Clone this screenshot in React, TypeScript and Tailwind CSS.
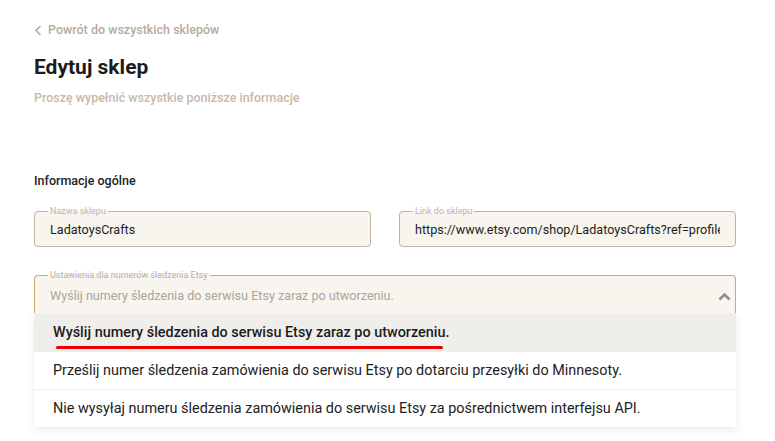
import React from 'react'

const font = { fontFamily: 'Roboto, "Noto Sans", sans-serif' }

function OutlinedField({ label, value }: { label: string; value: string }) {
  return (
    <fieldset className="relative h-[40px] min-w-0 overflow-hidden rounded-[4px] border border-[#c2b3a3] bg-[#f8f5ef] px-[15px]">
      <legend className="ml-[-2px] px-[2px] text-[9px] leading-[9px] text-[#bdb5ad]">{label}</legend>
      <div className="mt-[5px] overflow-hidden whitespace-nowrap text-[12.6px] leading-[18px] text-[#222]">{value}</div>
    </fieldset>
  )
}

export default function App() {
  const options = [
    'Wyślij numery śledzenia do serwisu Etsy zaraz po utworzeniu.',
    'Prześlij numer śledzenia zamówienia do serwisu Etsy po dotarciu przesyłki do Minnesoty.',
    'Nie wysyłaj numeru śledzenia zamówienia do serwisu Etsy za pośrednictwem interfejsu API.',
  ]

  return (
    <div className="h-[441px] w-[775px] overflow-hidden bg-white pl-[34px] pr-[39px]" style={font}>
      {/* Back link */}
      <div className="flex items-center gap-[6px] pt-[21px] text-[12.5px] font-medium text-[#b9aa9b]">
        <svg width="8" height="11" viewBox="0 0 8 11" fill="none">
          <path d="M6.5 1 L2 5.5 L6.5 10" stroke="#b9aa9b" strokeWidth="1.6" />
        </svg>
        <span>Powrót do wszystkich sklepów</span>
      </div>

      <h1 className="mt-[14px] text-[21px] font-bold leading-[26px] text-[#1c1c1c]">Edytuj sklep</h1>
      <p className="mt-[9px] text-[12.5px] font-medium text-[#c6b9ab]">Proszę wypełnić wszystkie poniższe informacje</p>

      <h2 className="mt-[64px] text-[12.5px] font-medium text-[#222]">Informacje ogólne</h2>

      <div className="mt-[17px] grid grid-cols-2 gap-[28px]">
        <OutlinedField label="Nazwa sklepu" value="LadatoysCrafts" />
        <OutlinedField label="Link do sklepu" value="https://www.etsy.com/shop/LadatoysCrafts?ref=profile_header" />
      </div>

      {/* Select */}
      <div className="relative mt-[24px]">
        <fieldset className="relative h-[41.5px] min-w-0 rounded-t-[4px] border border-b-0 border-[#d3a868] bg-[#f8f5ef] pl-[15px] pr-[4px]">
          <legend className="ml-[-2px] px-[2px] text-[9px] leading-[9px] text-[#b5ada5]">Ustawienia dla numerów śledzenia Etsy</legend>
          <div className="mt-[7px] flex items-center justify-between">
            <span className="text-[12.6px] leading-[18px] text-[#aaa49e]">Wyślij numery śledzenia do serwisu Etsy zaraz po utworzeniu.</span>
            <svg width="13" height="9" viewBox="0 0 13 9">
              <path d="M1.5 7.5 L6.5 2.5 L11.5 7.5" stroke="#8d8d8d" strokeWidth="2.6" fill="none" />
            </svg>
          </div>
        </fieldset>

        {/* Dropdown */}
        <div className="bg-white shadow-[0_3px_8px_rgba(120,100,80,0.12)]">
          {options.map((o, i) => (
            <div
              key={i}
              className={`relative flex h-[38px] items-center px-[19px] pt-[2px] text-[14.4px] ${
                i === 0 ? 'bg-[#f0eeea] font-medium text-[#1c1c1c]' : 'border-t border-[#efeeec] text-[#222]'
              }`}
            >
              {o}
              {i === 0 && (
                <span className="absolute left-[22px] top-[33px] h-[3px] w-[387px] rounded-full bg-[#f00000]" />
              )}
            </div>
          ))}
        </div>
      </div>
    </div>
  )
}
